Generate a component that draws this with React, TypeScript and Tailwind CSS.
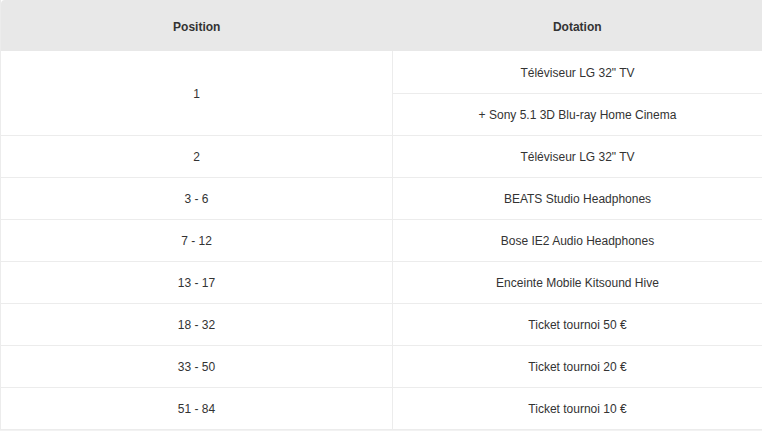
import React from "react";

const rows: { pos: string; prize: string }[] = [
  { pos: "2", prize: "Téléviseur LG 32\" TV" },
  { pos: "3 - 6", prize: "BEATS Studio Headphones" },
  { pos: "7 - 12", prize: "Bose IE2 Audio Headphones" },
  { pos: "13 - 17", prize: "Enceinte Mobile Kitsound Hive" },
  { pos: "18 - 32", prize: "Ticket tournoi 50 €" },
  { pos: "33 - 50", prize: "Ticket tournoi 20 €" },
  { pos: "51 - 84", prize: "Ticket tournoi 10 €" },
];

const cell = "h-[42px] p-0 pt-[2px] text-center align-middle border-t border-[#ececec]";

export default function App() {
  return (
    <div className="w-[762px] h-[432px] bg-white font-['Liberation_Sans',Arial,sans-serif] text-[12px] text-[#333]">
      <table className="w-full border-collapse table-fixed border-l border-b border-[#ececec] shadow-[0_1px_0_#f2f2f2]">
        <colgroup>
          <col className="w-[392px]" />
          <col />
        </colgroup>
        <thead>
          <tr className="bg-[#e8e8e8]">
            <th className="h-[51px] pt-[2px] font-bold text-center rounded-tl-[4px]">Position</th>
            <th className="h-[51px] pt-[2px] font-bold text-center">Dotation</th>
          </tr>
        </thead>
        <tbody>
          <tr>
            <td rowSpan={2} className={`${cell} h-[84px] border-r border-t-0`}>1</td>
            <td className="h-[42px] p-0 pt-[2px] text-center align-middle">Téléviseur LG 32" TV</td>
          </tr>
          <tr>
            <td className={cell}>+ Sony 5.1 3D Blu-ray Home Cinema</td>
          </tr>
          {rows.map((r) => (
            <tr key={r.pos}>
              <td className={`${cell} border-r`}>{r.pos}</td>
              <td className={cell}>{r.prize}</td>
            </tr>
          ))}
        </tbody>
      </table>
    </div>
  );
}
